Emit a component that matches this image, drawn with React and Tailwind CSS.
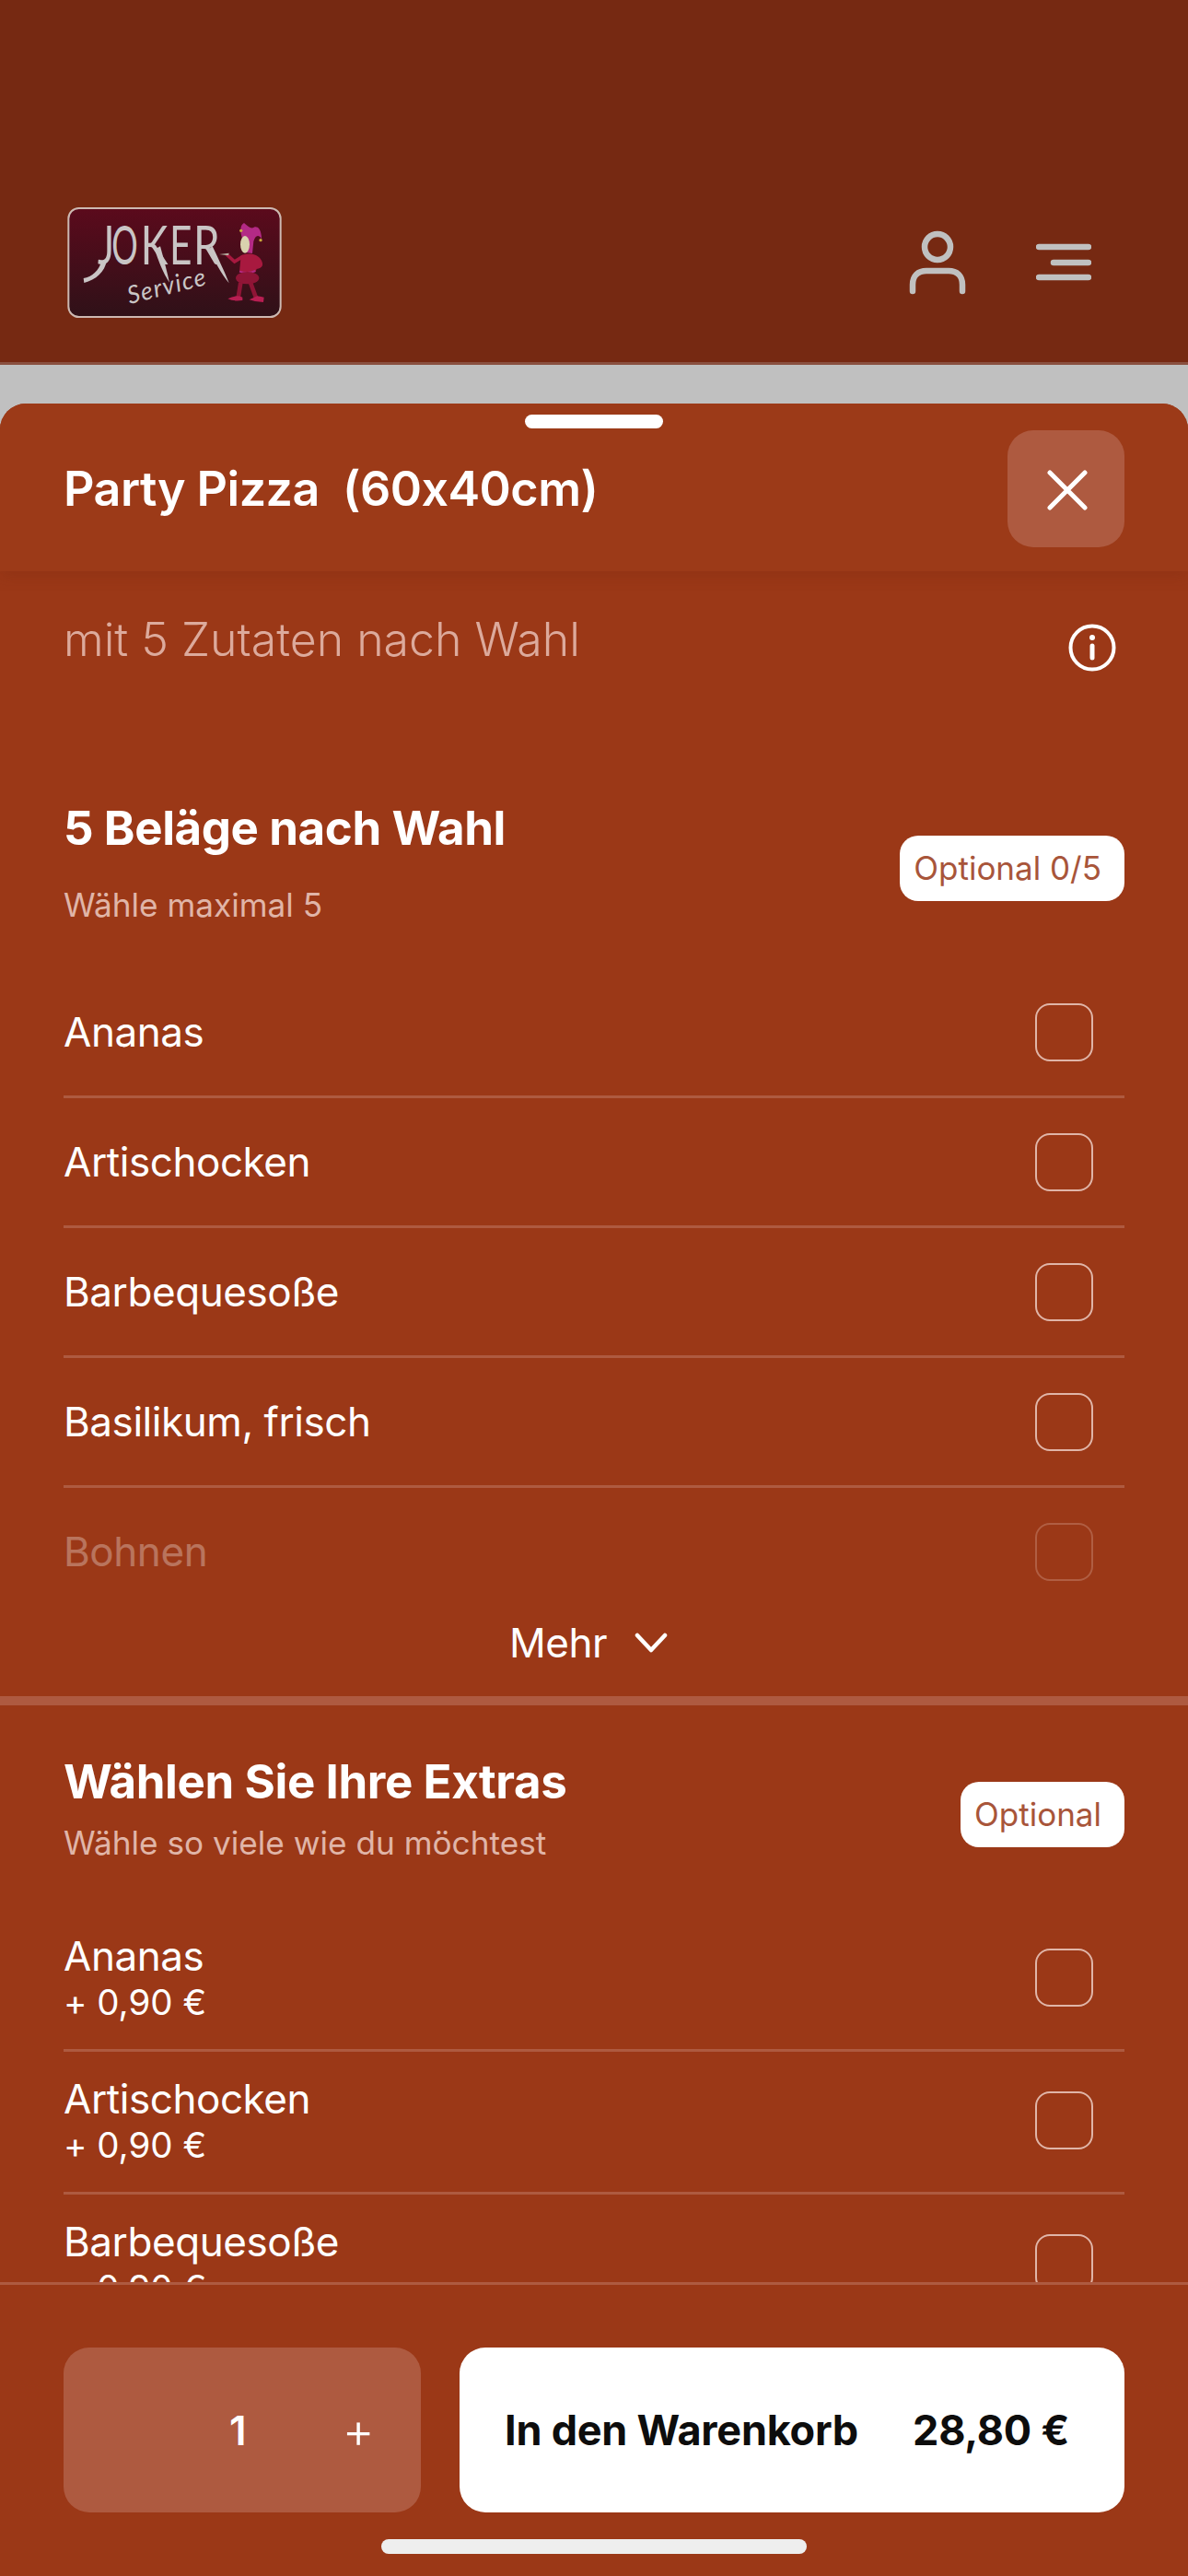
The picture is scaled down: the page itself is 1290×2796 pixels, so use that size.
const toppings = ['Ananas', 'Artischocken', 'Barbequesoße', 'Basilikum, frisch'];
const extras = ['Ananas', 'Artischocken', 'Barbequesoße'];

function JokerLogo() {
  // viewBox is in 3x crop units, drawn at 233x120
  return (
    <svg width="233" height="120" viewBox="220 135 697 360" className="block">
      <defs>
        <linearGradient id="logoBg" x1="0" y1="0" x2="0" y2="1">
          <stop offset="0" stopColor="#5b0a1c" />
          <stop offset="1" stopColor="#2f1118" />
        </linearGradient>
      </defs>
      <rect x="223" y="138" width="691" height="354" rx="34" fill="url(#logoBg)" stroke="#cdb9b2" strokeWidth="6" />
      <g fontFamily="Lato, sans-serif" fontWeight="400" fill="#c9c5c5">
        <text transform="translate(318 322) scale(0.75 1)" fontSize="172">J</text>
        <path d="M347 310 C342 345 312 372 274 381 L272 366 C300 362 322 342 331 310 Z" fill="#c9c5c5" />
        <text transform="translate(364 322) scale(0.62 1)" fontSize="172">O</text>
        <text transform="translate(458 322) scale(0.78 1)" fontSize="172">K</text>
        <path d="M522 262 C534 305 544 345 552 380 C532 350 516 310 504 272 Z" fill="#c9c5c5" />
        <text transform="translate(552 322) scale(0.74 1)" fontSize="172">E</text>
        <text transform="translate(630 322) scale(0.8 1)" fontSize="172">R</text>
        <path d="M692 262 C710 300 732 345 746 382 C720 350 700 310 678 272 Z" fill="#c9c5c5" />
        <text transform="translate(422 450) rotate(-14)" fontSize="80" fontStyle="italic" letterSpacing="4">Service</text>
      </g>
      <g>
        <path d="M790 240 C780 210 783 192 795 186 C808 196 818 208 830 199 C842 197 852 210 852 238 C842 222 832 226 826 246 L822 285 L800 282 Z" fill="#b32a85" />
        <circle cx="785" cy="211" r="5" fill="#c9a93b" />
        <circle cx="849" cy="242" r="5" fill="#c9a93b" />
        <ellipse cx="798" cy="256" rx="15" ry="28" fill="#d9d2ae" />
        <path d="M740 290 L764 312 L790 296" fill="none" stroke="#a8193f" strokeWidth="11" strokeLinecap="round" />
        <path d="M714 288 L746 284 L744 292 Z" fill="#b5b0a0" />
        <path d="M785 292 C805 282 835 285 848 302 C862 322 855 332 836 336 L832 346 L780 346 Z" fill="#a8193f" />
        <path d="M780 344 C800 350 815 350 832 342" fill="none" stroke="#b32a85" strokeWidth="6" />
        <ellipse cx="806" cy="365" rx="38" ry="20" fill="#8f1536" />
        <path d="M784 380 L776 430 M816 380 L834 430" stroke="#8f1536" strokeWidth="14" fill="none" />
        <path d="M742 433 Q768 418 790 428 L790 438 Q762 442 742 433 Z M812 436 L838 424 Q852 426 860 428 L858 444 Q832 444 812 436 Z" fill="#b81e52" />
      </g>
    </svg>
  );
}

function Checkbox({ className = '' }) {
  return <div className={`w-[63px] h-[63px] rounded-[16px] border-2 border-[#e0b5a8] shrink-0 ${className}`} />;
}

function Row({ name, price, last }) {
  return (
    <div className={`flex items-center justify-between pr-[34px] border-b-[3px] ${price ? 'h-[155px]' : 'h-[141px]'} ${last ? 'border-transparent' : 'border-[#ae5a40]'}`}>
      <div className="text-white text-[44px] leading-[50px] tracking-[-0.01em]">
        <div>{name}</div>
        {price && <div className="text-[38.5px] tracking-normal">{price}</div>}
      </div>
      <Checkbox className={price ? 'mb-[3px]' : ''} />
    </div>
  );
}

function SectionHead({ title, sub, badge, subGap, badgeGap }) {
  return (
    <div className="flex justify-between">
      <div>
        <div className="text-white text-[51px] leading-[60px] font-bold tracking-[-0.008em]">{title}</div>
        <div className={`text-[#e0b5a8] text-[35.2px] leading-[40px] ${subGap}`}>{sub}</div>
      </div>
      <div className={`self-end ${badgeGap} h-[71px] pl-[15px] pr-[25px] flex items-center bg-white rounded-[20px] text-[#a8553a] text-[35px]`}>
        {badge}
      </div>
    </div>
  );
}

export default function App() {
  return (
    <div className="w-[1290px] h-[2796px] flex flex-col bg-[#c0c0c0] font-['Inter',sans-serif] [font-feature-settings:'calt'_0] overflow-hidden">
      <header className="h-[396px] shrink-0 bg-[#762912] border-b-[3px] border-[#8a5040] pl-[73px] pr-[105px] pb-[48px] flex items-end justify-between">
        <JokerLogo />
        <div className="flex items-center gap-[73px] mb-[20px]">
          <svg width="68" height="76" viewBox="0 0 68 76" fill="none" stroke="#c0c0c0" strokeWidth="6.5" strokeLinecap="round">
            <circle cx="34" cy="19" r="14" />
            <path d="M7 67 V60 C7 50 13 45 22 45 H46 C55 45 61 50 61 60 V67" />
          </svg>
          <svg width="60" height="42" viewBox="0 0 60 42" fill="none" stroke="#c0c0c0" strokeWidth="6.5" strokeLinecap="round" className="mb-[4px]">
            <path d="M3 4 H57 M19 21 H57 M3 37 H57" />
          </svg>
        </div>
      </header>

      <div className="h-[42px] shrink-0" />

      <main className="flex-1 min-h-0 flex flex-col bg-[#9b3817] rounded-t-[28px] overflow-hidden">
        <div className="h-[182px] shrink-0 px-[69px] pt-[12px] flex flex-col bg-[#9c3a18] shadow-[0_6px_14px_rgba(120,40,15,0.25)] z-10">
          <div className="w-[150px] h-[15px] rounded-full bg-white self-center ml-[-1px]" />
          <div className="flex items-center justify-between mt-[2px]">
            <div className="text-white text-[52px] font-semibold whitespace-pre tracking-[-0.01em]">Party Pizza  (60x40cm)</div>
            <button className="w-[127px] h-[127px] pl-[3px] pt-[2px] rounded-[28px] bg-[#ae5a40] flex items-center justify-center">
              <svg width="44" height="44" viewBox="0 0 44 44" stroke="#fff" strokeWidth="5" strokeLinecap="round">
                <path d="M3 3 L41 41 M41 3 L3 41" />
              </svg>
            </button>
          </div>
        </div>

        <div className="flex-1 min-h-0 overflow-hidden">
          <div className="h-[249px] px-[69px] pt-[44px] flex justify-between">
            <div className="text-[#dcaa9c] text-[50px] leading-[60px] font-light">mit 5 Zutaten nach Wahl</div>
            <svg width="52" height="52" viewBox="0 0 52 52" fill="none" stroke="#fff" className="mt-[13px] mr-[9px]">
              <circle cx="26" cy="26" r="23.5" strokeWidth="4" />
              <path d="M26 24 V37" strokeWidth="5" strokeLinecap="round" />
              <circle cx="26" cy="15" r="3" fill="#fff" stroke="none" />
            </svg>
          </div>

          <div className="px-[69px]">
            <SectionHead title="5 Beläge nach Wahl" sub="Wähle maximal 5" badge="Optional 0/5" subGap="mt-[33px]" badgeGap="mb-[24px]" />
            <div className="mt-[49px]">
              {toppings.map((name) => <Row key={name} name={name} />)}
              <div className="opacity-30"><Row name="Bohnen" last /></div>
            </div>
            <div className="h-[54px] flex items-center justify-center gap-[30px] text-white text-[44px] tracking-[-0.01em] pr-[12px]">
              <span>Mehr</span>
              <svg width="36" height="22" viewBox="0 0 36 22" fill="none" stroke="#fff" strokeWidth="4.5" strokeLinecap="round" strokeLinejoin="round">
                <path d="M3 3 L18 19 L33 3" />
              </svg>
            </div>
          </div>

          <div className="h-[10px] mt-[31px] bg-[#ae5a40]" />

          <div className="px-[69px] pt-[53px]">
            <SectionHead title="Wählen Sie Ihre Extras" sub="Wähle so viele wie du möchtest" badge="Optional" subGap="mt-[16px]" badgeGap="mb-[15px]" />
            <div className="mt-[52px]">
              {extras.map((name) => <Row key={name} name={name} price="+ 0,90 €" />)}
            </div>
          </div>
        </div>

        <footer className="h-[319px] shrink-0 border-t-[3px] border-[#ae5a40] px-[69px] pt-[68px] bg-[#9b3817] z-10">
          <div className="flex gap-[42px]">
            <div className="w-[388px] h-[179px] rounded-[28px] bg-[#ae5a40] flex items-center text-white">
              <span className="ml-[180px] text-[44px] font-semibold">1</span>
              <span className="ml-[104px] text-[54px] font-light">+</span>
            </div>
            <button className="flex-1 h-[179px] rounded-[28px] bg-white flex items-center justify-between pl-[49px] pr-[60px] text-[#0d0d0d] text-[45px] font-bold tracking-[-0.005em]">
              <span>In den Warenkorb</span>
              <span>28,80 €</span>
            </button>
          </div>
          <div className="w-[462px] h-[16px] mt-[29px] mx-auto rounded-full bg-[#eeeeee]" />
        </footer>
      </main>
    </div>
  );
}
